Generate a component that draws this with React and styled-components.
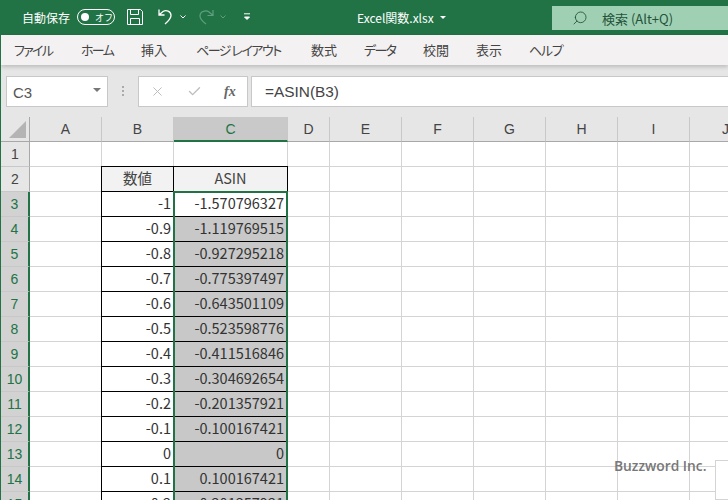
import React from "react";
import styled, { createGlobalStyle } from "styled-components";
import { X, Check, Search } from "lucide-react";

const GlobalStyle = createGlobalStyle`
    html, body {
        margin: 0;
        height: 100%;
        overflow: hidden;
        background: #fff;
    }
    * {
        box-sizing: border-box;
    }
`;

const JP = `"Noto Sans CJK JP", "Liberation Sans", sans-serif`;

const Window = styled.div`
    position: relative;
    width: 728px;
    height: 500px;
    overflow: hidden;
    font-family: ${JP};
    border-left: 1px solid #217346;
`;

const TitleBar = styled.header`
    height: 35px;
    background: #217346;
    display: flex;
    align-items: center;
    color: #fff;
    font-size: 12px;
    padding: 0 0 1px 21px;
`;

const AutoSave = styled.span`
    width: 55px;
`;

const Toggle = styled.span`
    width: 38px;
    height: 16px;
    border: 1px solid #fff;
    border-radius: 8px;
    display: flex;
    align-items: center;
    padding-left: 3px;
    gap: 6px;
    font-size: 9px;
    line-height: 1;
    &::before {
        content: "";
        width: 8px;
        height: 8px;
        border-radius: 50%;
        background: #fff;
    }
`;

const TitleIcon = styled.svg`
    flex: none;
    margin-left: ${(props) => props.$left}px;
`;

const FileName = styled.span`
    margin-left: 106px;
    display: flex;
    align-items: center;
    gap: 6px;
    font-size: 12px;
    white-space: nowrap;
    font-feature-settings: "palt";
    &::after {
        content: "";
        border-left: 3px solid transparent;
        border-right: 3px solid transparent;
        border-top: 3px solid #fff;
    }
`;

const SearchBox = styled.div`
    margin-left: auto;
    margin-top: 2px;
    width: 176px;
    height: 24px;
    background: #9fd0b3;
    color: #24533a;
    display: flex;
    align-items: center;
    padding-left: 20px;
    gap: 14px;
    font-size: 13px;
`;

const MenuBar = styled.nav`
    height: 30px;
    background: #f3f1f1;
    display: flex;
    align-items: center;
    color: #444;
    font-size: 13px;
    padding: 0 0 2px 13px;
    box-shadow: 0 2px 4px rgba(0, 0, 0, 0.18);
    position: relative;
    font-feature-settings: "palt";
`;

const MenuItem = styled.span`
    width: ${(props) => props.$width}px;
    white-space: nowrap;
    letter-spacing: ${(props) => props.$spacing}px;
`;

const FormulaBar = styled.div`
    height: 52px;
    background: #e6e6e6;
    padding: 11px 0 0 5px;
    display: flex;
    align-items: flex-start;
`;

const NameBox = styled.div`
    width: 102px;
    height: 31px;
    background: #fff;
    border: 1px solid #c8c8c8;
    display: flex;
    align-items: center;
    justify-content: space-between;
    padding: 2px 6px 0 6px;
    color: #555;
    font-size: 15px;
    font-family: "Liberation Sans", sans-serif;
    &::after {
        content: "";
        border-left: 4px solid transparent;
        border-right: 4px solid transparent;
        border-top: 4px solid #777;
        margin-top: -5px;
    }
`;

const Grip = styled.span`
    width: 30px;
    height: 31px;
    display: flex;
    align-items: center;
    justify-content: center;
    &::before {
        content: "";
        width: 2px;
        height: 11px;
        background: repeating-linear-gradient(#aaa 0 2px, transparent 2px 4px);
    }
`;

const FormulaButtons = styled.div`
    width: 110px;
    height: 31px;
    background: #fff;
    border: 1px solid #c8c8c8;
    display: flex;
    align-items: center;
    padding-left: 11px;
`;

const ButtonSlot = styled.span`
    width: 37px;
    display: flex;
    align-items: center;
    color: #bdbdbd;
`;

const Fx = styled.i`
    font-family: "Liberation Serif", serif;
    font-weight: bold;
    font-size: 14px;
    color: #666;
    font-style: italic;
`;

const FormulaInput = styled.div`
    flex: 1;
    height: 31px;
    margin-left: 3px;
    background: #fff;
    border: 1px solid #c8c8c8;
    border-right: none;
    display: flex;
    align-items: center;
    padding-left: 13px;
    color: #444;
    font-size: 15.4px;
    font-family: "Liberation Sans", sans-serif;
`;

const Sheet = styled.div`
    position: relative;
    display: grid;
    grid-template-columns: 29px 72px 72px 114px 42px repeat(7, 72px);
    grid-auto-rows: 25px;
`;

const ColHead = styled.div`
    background: ${(props) => (props.$active ? "#c9c9c9" : "#e6e6e6")};
    border-right: 1px solid #c8c8c8;
    border-bottom: ${(props) =>
        props.$active ? "2px solid #217346" : "1px solid #a8a8a8"};
    color: ${(props) => (props.$active ? "#217346" : "#444")};
    display: flex;
    align-items: center;
    justify-content: center;
    font-size: 14px;
    font-family: "Liberation Sans", sans-serif;
`;

const Corner = styled(ColHead)`
    position: relative;
    border-right: 1px solid #a8a8a8;
    &::after {
        content: "";
        position: absolute;
        right: 3px;
        bottom: 3px;
        border-left: 17px solid transparent;
        border-bottom: 17px solid #b4b4b4;
    }
`;

const RowHead = styled.div`
    background: ${(props) => (props.$active ? "#d2d2d2" : "#e6e6e6")};
    border-right: ${(props) =>
        props.$active ? "2px solid #217346" : "1px solid #a8a8a8"};
    border-bottom: 1px solid #c8c8c8;
    color: ${(props) => (props.$active ? "#217346" : "#444")};
    display: flex;
    align-items: center;
    justify-content: center;
    font-size: 14px;
    font-family: "Liberation Sans", sans-serif;
`;

const Cell = styled.div`
    background: ${(props) => props.$bg || "#fff"};
    border-right: 1px solid ${(props) => (props.$boxed ? "#000" : "#d4d4d4")};
    border-bottom: 1px solid ${(props) => (props.$boxed ? "#000" : "#d4d4d4")};
    box-shadow: ${(props) => (props.$top ? "0 -1px 0 #000" : "none")};
    border-left: ${(props) => (props.$leftEdge ? "1px solid #000" : "none")};
    margin-left: ${(props) => (props.$leftEdge ? "-1px" : "0")};
    display: flex;
    align-items: center;
    justify-content: ${(props) => (props.$center ? "center" : "flex-end")};
    padding: 0 ${(props) => (props.$center ? 0 : props.$inset)}px 3px 0;
    color: ${(props) => (props.$center ? "#444" : "#333")};
    font-size: 14.5px;
    white-space: nowrap;
`;

const Selection = styled.div`
    position: absolute;
    left: 172px;
    top: 74px;
    width: 115px;
    height: 340px;
    border: 2px solid #217346;
    border-bottom: none;
    pointer-events: none;
`;

const Watermark = styled.div`
    position: absolute;
    left: 613px;
    top: 456px;
    color: #777;
    font-size: 13.8px;
    font-weight: 600;
    font-family: "Open Sans", sans-serif;
`;

const CornerPatch = styled.div`
    position: absolute;
    left: 714px;
    top: 460px;
    width: 20px;
    height: 40px;
    background: #fff;
    border: 1px solid #d4d4d4;
`;

const menus = [
    ["ファイル", 67, -1.7],
    ["ホーム", 60, -1.7],
    ["挿入", 55, 0],
    ["ページ レイアウト", 115, -1.5],
    ["数式", 53, 0],
    ["データ", 59, -1.7],
    ["校閲", 53, 0],
    ["表示", 53, 0],
    ["ヘルプ", 60, -1.3],
];

const columns = ["A", "B", "C", "D", "E", "F", "G", "H", "I", "J", "K"];

const data = [
    ["-1", "-1.570796327"],
    ["-0.9", "-1.119769515"],
    ["-0.8", "-0.927295218"],
    ["-0.7", "-0.775397497"],
    ["-0.6", "-0.643501109"],
    ["-0.5", "-0.523598776"],
    ["-0.4", "-0.411516846"],
    ["-0.3", "-0.304692654"],
    ["-0.2", "-0.201357921"],
    ["-0.1", "-0.100167421"],
    ["0", "0"],
    ["0.1", "0.100167421"],
    ["0.2", "0.201357921"],
];

const rowValues = (row) => {
    if (row === 2) return ["", "数値", "ASIN"];
    if (row >= 3) return ["", ...data[row - 3]];
    return ["", "", ""];
};

const App = () => {
    const rows = Array.from({ length: 15 }, (_, index) => index + 1);
    return (
        <Window>
            <GlobalStyle />
            <TitleBar>
                <AutoSave>自動保存</AutoSave>
                <Toggle>オフ</Toggle>
                <TitleIcon $left={12} width="16" height="16" viewBox="0 0 16 16" fill="none" stroke="#fff">
                    <path d="M.5.5h13l2 2v13H.5zM3.500.5v5h8v-5M3.500 15.500v-6h9v6" />
                </TitleIcon>
                <TitleIcon $left={14} width="18" height="18" viewBox="0 0 18 18" fill="none" stroke="#fff" strokeWidth="1.3">
                    <path d="M2 1.500v5.500h5.500M2.500 6.500 6 3.500c3-2 8-.5 8 4 0 3-2 5-6 8.500" />
                </TitleIcon>
                <TitleIcon $left={5} width="6" height="6" viewBox="0 0 6 6" fill="none" stroke="#fff">
                    <path d="M.5 1.500 3 4l2.500-2.500" />
                </TitleIcon>
                <TitleIcon $left={11} width="18" height="18" viewBox="0 0 18 18" fill="none" stroke="#5f9f7f" strokeWidth="1.2">
                    <path d="M16 2v5.500h-5.500M15.500 7 12 4c-3-2-9-1-9 4 0 3 2 5 6 8" />
                </TitleIcon>
                <TitleIcon $left={5} width="6" height="6" viewBox="0 0 6 6" fill="none" stroke="#5f9f7f">
                    <path d="M.5 1.500 3 4l2.500-2.500" />
                </TitleIcon>
                <TitleIcon $left={17} width="8" height="8" viewBox="0 0 8 8" fill="#fff" stroke="#fff">
                    <path d="M1 .8h6" fill="none" />
                    <path d="M1.500 4h5L4 6.500z" />
                </TitleIcon>
                <FileName>Excel関数.xlsx</FileName>
                <SearchBox>
                    <Search size={16} strokeWidth={1.3} style={{ transform: "scaleX(-1)" }} />
                    検索 (Alt+Q)
                </SearchBox>
            </TitleBar>
            <MenuBar>
                {menus.map(([label, width, spacing]) => (
                    <MenuItem key={label} $width={width} $spacing={spacing}>
                        {label}
                    </MenuItem>
                ))}
            </MenuBar>
            <FormulaBar>
                <NameBox>C3</NameBox>
                <Grip />
                <FormulaButtons>
                    <ButtonSlot>
                        <X size={15} strokeWidth={1.6} />
                    </ButtonSlot>
                    <ButtonSlot>
                        <Check size={15} strokeWidth={2.2} />
                    </ButtonSlot>
                    <Fx>fx</Fx>
                </FormulaButtons>
                <FormulaInput>=ASIN(B3)</FormulaInput>
            </FormulaBar>
            <Sheet>
                <Corner />
                {columns.map((col) => (
                    <ColHead key={col} $active={col === "C"}>
                        {col}
                    </ColHead>
                ))}
                {rows.map((row) => {
                    const values = rowValues(row);
                    const boxed = row >= 2;
                    return (
                        <React.Fragment key={row}>
                            <RowHead $active={row >= 3}>{row}</RowHead>
                            {columns.map((col, index) => (
                                <Cell
                                    key={col}
                                    $boxed={boxed && (index === 1 || index === 2)}
                                    $top={row === 2 && (index === 1 || index === 2)}
                                    $leftEdge={boxed && index === 1}
                                    $center={row === 2}
                                    $inset={index === 2 ? 3 : 2}
                                    $bg={
                                        row === 2 && (index === 1 || index === 2)
                                            ? "#f2f2f2"
                                            : row >= 4 && index === 2
                                              ? "#c8c8c8"
                                              : undefined
                                    }
                                >
                                    {values[index]}
                                </Cell>
                            ))}
                        </React.Fragment>
                    );
                })}
                <Selection />
            </Sheet>
            <CornerPatch />
            <Watermark>Buzzword Inc.</Watermark>
        </Window>
    );
};

export default App;
